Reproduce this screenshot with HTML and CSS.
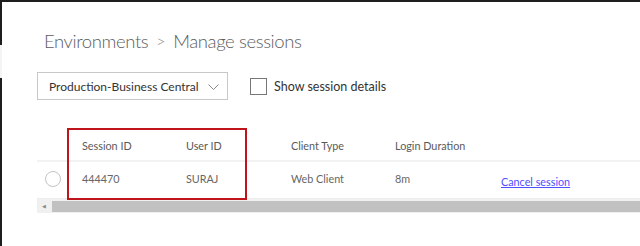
FILE: index.html
```html
<!DOCTYPE html>
<html lang="en">
<head>
    <meta charset="UTF-8">
    <meta name="viewport" content="width=device-width, initial-scale=1.0">
    <title>Manage sessions</title>
    <link rel="stylesheet" href="styles.css">
</head>
<body>
    <div class="frame">
        <div class="rail">
            <div class="rail-top"></div>
            <div class="rail-gap"></div>
            <div class="rail-bottom"></div>
        </div>

        <div class="main">
            <h1 class="breadcrumb">
                <span>Environments</span>
                <span class="sep">&gt;</span>
                <span>Manage sessions</span>
            </h1>

            <div class="toolbar">
                <div class="dropdown">
                    <span>Production-Business Central</span>
                    <svg class="chevron" width="11" height="6" viewBox="0 0 11 6">
                        <path d="M0.5 0.5 L5.5 5.5 L10.5 0.5" fill="none" stroke="#888" stroke-width="1"/>
                    </svg>
                </div>
                <label class="check">
                    <span class="box"></span>
                    <span>Show session details</span>
                </label>
            </div>

            <div class="sessions">
                <div class="row head">
                    <div></div>
                    <div>Session ID</div>
                    <div>User ID</div>
                    <div>Client Type</div>
                    <div>Login Duration</div>
                    <div></div>
                </div>
                <div class="row item">
                    <div><span class="radio"></span></div>
                    <div>444470</div>
                    <div>SURAJ</div>
                    <div>Web Client</div>
                    <div>8m</div>
                    <div><a href="#" class="cancel">Cancel session</a></div>
                </div>
                <div class="scrollbar">
                    <span class="arrow">&#9664;</span>
                    <span class="thumb"></span>
                </div>

                <!-- highlight drawn over the id columns -->
                <div class="highlight"></div>
            </div>
        </div>
    </div>
</body>
</html>
```

FILE: styles.css
```css
body {
    margin: 0;
    background-color: #fff;
    font-family: Lato, "Open Sans", sans-serif;
    color: #555;
}
.frame {
    display: flex;
    height: 246px;
    border-top: 2px solid #1e1e1e;
    box-sizing: border-box;
}
.rail {
    width: 2px;
    display: flex;
    flex-direction: column;
}
.rail-top {
    height: 43px;
    background-color: #1e1e1e;
}
.rail-gap {
    height: 33px;
    background-color: #f4f4f4;
}
.rail-bottom {
    flex: 1;
    background-color: #1e1e1e;
}
.main {
    flex: 1;
    padding-left: 35px;
}
.breadcrumb {
    margin: 0;
    padding: 25px 0 0 7px;
    font-size: 18.5px;
    font-weight: 300;
    letter-spacing: -0.4px;
    line-height: 28px;
    color: #5c5c5c;
    display: flex;
    gap: 8px;
}
.breadcrumb .sep {
    color: #888;
    font-size: 16px;
}
.toolbar {
    display: flex;
    align-items: center;
    gap: 22px;
    margin-top: 17px;
}
.dropdown {
    width: 191px;
    height: 28px;
    box-sizing: border-box;
    border: 1px solid #c8c8c8;
    display: flex;
    align-items: center;
    gap: 9px;
    padding-left: 11px;
    font-size: 12px;
    color: #333;
    white-space: nowrap;
}
.chevron {
    margin-top: 1px;
}
.check {
    display: flex;
    align-items: center;
    gap: 7px;
    font-size: 12.5px;
    color: #333;
}
.check .box {
    width: 17px;
    height: 17px;
    box-sizing: border-box;
    border: 1px solid #777;
}
.sessions {
    position: relative;
    margin-top: 30px;
}
.row {
    display: grid;
    grid-template-columns: 45px 104px 105px 104px 106px 1fr;
    align-items: center;
    font-size: 10.8px;
}
.head {
    height: 30px;
    color: #5a5a5a;
    border-bottom: 2px solid #f2f2f2;
}
.item {
    height: 37px;
    box-sizing: border-box;
    padding-bottom: 3px;
    color: #666;
    border-bottom: 1px solid #ececec;
}
.radio {
    display: block;
    width: 16px;
    height: 16px;
    box-sizing: border-box;
    border: 1px solid #c4c4c4;
    border-radius: 50%;
    margin-left: 8px;
}
.cancel {
    color: #4f4fff;
    margin-top: 6px;
    display: inline-block;
}
.scrollbar {
    height: 14px;
    background-color: #f0f0f0;
    display: flex;
    align-items: center;
    padding-left: 5px;
    gap: 6px;
}
.arrow {
    font-size: 5px;
    color: #888;
    width: 4px;
}
.thumb {
    flex: 1;
    height: 11px;
    background-color: #c1c1c1;
}
.highlight {
    position: absolute;
    left: 30px;
    top: -2px;
    width: 180px;
    height: 72px;
    box-sizing: border-box;
    border: 2px solid #c0141c;
}
```
